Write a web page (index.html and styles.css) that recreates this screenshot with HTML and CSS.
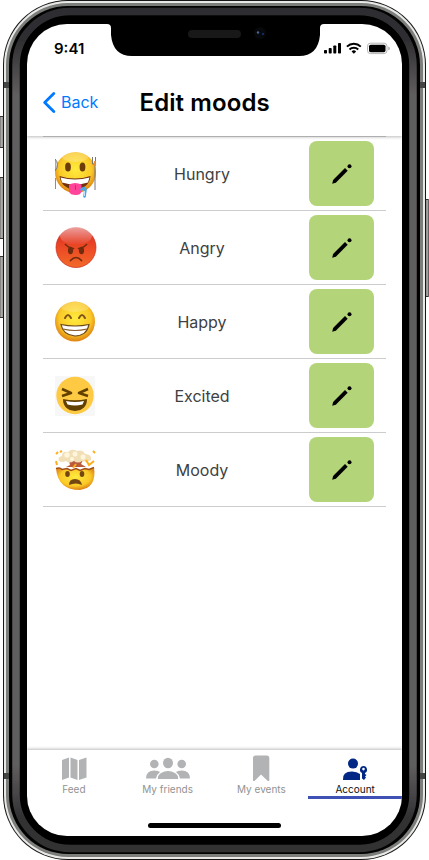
FILE: index.html
```
<!DOCTYPE html>
<html lang="en">
<head>
<meta charset="utf-8">
<title>Edit moods</title>
<link rel="stylesheet" href="styles.css">
</head>
<body>
<svg class="device" viewBox="0 0 429 860" aria-hidden="true">
  <defs>
    <linearGradient id="bezel" x1="0" y1="0" x2="0" y2="1">
      <stop offset="0" stop-color="#2f2f31"/><stop offset=".035" stop-color="#2f2f31"/>
      <stop offset=".1" stop-color="#615e5f"/><stop offset=".9" stop-color="#615e5f"/>
      <stop offset=".965" stop-color="#303032"/><stop offset="1" stop-color="#303032"/>
    </linearGradient>
    <linearGradient id="button"><stop offset="0" stop-color="#555"/><stop offset=".5" stop-color="#aaa9a5"/><stop offset="1" stop-color="#888"/></linearGradient>
    <filter id="soft"><feGaussianBlur stdDeviation=".7"/></filter>
    <radialGradient id="yellow" cy=".42" r=".55"><stop offset="0" stop-color="#ffeb3d"/><stop offset=".72" stop-color="#fac928"/><stop offset="1" stop-color="#e18a16"/></radialGradient>
    <linearGradient id="red" x2="0" y2="1"><stop offset="0" stop-color="#d92923"/><stop offset=".55" stop-color="#ed4c25"/><stop offset="1" stop-color="#f26a29"/></linearGradient>
    <linearGradient id="shine" x2="0" y2="1"><stop offset="0" stop-color="#fff" stop-opacity=".6"/><stop offset="1" stop-color="#fff" stop-opacity="0"/></linearGradient>
  </defs>
  <g fill="url(#button)" stroke="#333" stroke-width="1">
    <rect x="-1" y="116.500" width="5" height="31" rx="1"/><rect x="-1" y="177.500" width="5" height="61" rx="1"/><rect x="-1" y="256.500" width="5" height="61" rx="1"/><rect x="425" y="199.500" width="4" height="97" rx="1"/>
  </g>
  <rect x="3" width="423" height="860" rx="65" fill="#171717"/>
  <rect x="4" y="1" width="421" height="858" rx="64" fill="#e9e9e7"/>
  <rect x="6" y="3" width="417" height="854" rx="62" fill="#7b7e7b"/>
  <rect x="9" y="6" width="411" height="848" rx="59" fill="#020202"/>
  <rect x="16" y="11.500" width="397" height="837" rx="54" fill="none" stroke="url(#bezel)" stroke-width="7.500" filter="url(#soft)"/>
  <rect x="20.500" y="16" width="388" height="828" rx="48" fill="#000"/>
  <path d="M4 82h5v6H4zM420 82h5v6h-5zM4 773h5v6H4zM420 773h5v6h-5z" fill="#444"/>
</svg>

<main class="screen">
  <div class="status">
    <time class="clock">9:41</time>
    <svg class="signals" width="66" height="14" viewBox="0 0 66 14" aria-hidden="true">
      <g><rect y="9" width="3" height="3.500" rx=".8"/><rect x="4.700" y="7" width="3" height="5.500" rx=".8"/><rect x="9.300" y="4.500" width="3" height="8" rx=".8"/><rect x="14" y="2" width="3" height="10.500" rx=".8"/></g>
      <g fill="none" stroke="#000" stroke-width="2"><path d="M22.900 5.600a10 10 0 0 1 13.900 0M25.500 8.500a6.200 6.200 0 0 1 8.700 0"/></g>
      <path d="m29.850 12.800-2.300-2.400a3.300 3.300 0 0 1 4.600 0z"/>
      <rect x="43.500" y="2.200" width="19.500" height="10.400" rx="3" fill="none" stroke="#b5b5b5"/><rect x="45" y="3.700" width="16.500" height="7.500" rx="1.600"/><path d="M64.200 5.500q1.800.5 1.800 1.900t-1.800 1.900z" fill="#b5b5b5"/>
    </svg>
  </div>

  <header class="header">
    <a class="back"><svg width="13" height="21" viewBox="0 0 13 21"><path d="M10.800 1.500 1.700 10.500l9.100 9" fill="none" stroke="#007aff" stroke-width="2.800" stroke-linecap="round" stroke-linejoin="round"/></svg>Back</a>
    <h1 class="title">Edit moods</h1>
  </header>

  <ul class="moods">
    <li class="mood">
      <svg class="face" viewBox="0 0 42 50">
        <circle cx="20.500" cy="23.500" r="20.500" fill="url(#yellow)"/>
        <ellipse cx="20" cy="8" rx="13" ry="5" fill="#fff" opacity=".22"/>
        <path d="M0 10q5 5 0 12z" fill="#ddd" stroke="#777"/><path d="M.5 29v11" stroke="#a86" fill="none"/>
        <path d="M37.500 8v7h2.500v26M40.500 8v6" fill="none" stroke="#777"/><path d="M40 12v5" stroke="#e58b35" stroke-width="2"/>
        <ellipse cx="13" cy="18" rx="2.900" ry="4.500" fill="#6b3c09"/><ellipse cx="27.500" cy="18" rx="2.900" ry="4.500" fill="#6b3c09"/>
        <path d="M4.500 27q15.500 5 31 0-1 12-15.500 14Q6 39 4.500 27z" fill="#713112"/><path d="M5.500 28.500q14.500 4 29 0l-1.500 5q-13 4-26 0z" fill="#fff"/>
        <path d="M14 35.500q6-3 12.500 0v7q-1 3.500-5.500 3.500-6 0-7-3.500z" fill="#ff4499"/><path d="M20.500 36v5" stroke="#d72578"/>
        <path d="M26.500 40.500q3-3 4 0l-1 7" fill="none" stroke="#49a5e8" stroke-width="2.600" stroke-linecap="round"/><path d="M29.500 42v5" stroke="#b9e4fc"/>
      </svg>
      <span class="name">Hungry</span>
      <button class="edit" aria-label="Edit Hungry"><svg viewBox="0 0 22 22"><path d="m1.200 20.800.9-3.800L14 5.100l2.700 2.700L4.800 19.700z"/><circle cx="18.500" cy="3.300" r="2"/></svg></button>
    </li>
    <li class="mood">
      <svg class="face" viewBox="0 0 42 50">
        <circle cx="21" cy="24.500" r="20" fill="url(#red)" stroke="#c92c20" stroke-width=".7"/><ellipse cx="21" cy="12.500" rx="16" ry="9.500" fill="url(#shine)"/>
        <g fill="#712c0d"><ellipse cx="15.500" cy="27.500" rx="2.600" ry="3.700"/><ellipse cx="26.500" cy="27.500" rx="2.600" ry="3.700"/></g>
        <path d="M10.500 21.500q4 4 8 4M31.500 21.500q-4 4-8 4M15.500 37.500q5.500-6 11 0" fill="none" stroke="#712c0d" stroke-width="1.700" stroke-linecap="round"/>
      </svg>
      <span class="name">Angry</span>
      <button class="edit" aria-label="Edit Angry"><svg viewBox="0 0 22 22"><path d="m1.200 20.800.9-3.800L14 5.100l2.700 2.700L4.800 19.700z"/><circle cx="18.500" cy="3.300" r="2"/></svg></button>
    </li>
    <li class="mood">
      <svg class="face" viewBox="0 0 42 50">
        <circle cx="20" cy="24.500" r="20" fill="url(#yellow)"/><ellipse cx="20" cy="10" rx="14" ry="5" fill="#fff" opacity=".2"/>
        <path d="M10 21q3-6 6 0M24 21q3-6 6 0" fill="none" stroke="#805217" stroke-width="2" stroke-linecap="round"/>
        <path d="M6 27.500q14 3 28 0-2 11-14 11.500Q8 38 6 27.500z" fill="#fff" stroke="#6b4618" stroke-width="1.200"/><path d="M8 32q12 3 24 0" fill="none" stroke="#865a27" stroke-width="1.200"/>
      </svg>
      <span class="name">Happy</span>
      <button class="edit" aria-label="Edit Happy"><svg viewBox="0 0 22 22"><path d="m1.200 20.800.9-3.800L14 5.100l2.700 2.700L4.800 19.700z"/><circle cx="18.500" cy="3.300" r="2"/></svg></button>
    </li>
    <li class="mood">
      <svg class="face" viewBox="0 0 42 50">
        <path d="M0 5h40v40H0z" fill="#f7f7f7"/><circle cx="20" cy="24.500" r="18.700" fill="#ffca43"/>
        <path d="m7 18 9 4-9 3M33 18l-9 4 9 3" fill="none" stroke="#614000" stroke-width="2.600" stroke-linejoin="round"/>
        <path d="M8 28q12 2.500 24 0 0 11-12 12Q8 39 8 28z" fill="#614000"/><path d="M11 30q9 2 18 0l-1.500 3.500q-7.500 2-15 0z" fill="#fff"/>
      </svg>
      <span class="name">Excited</span>
      <button class="edit" aria-label="Edit Excited"><svg viewBox="0 0 22 22"><path d="m1.200 20.800.9-3.800L14 5.100l2.700 2.700L4.800 19.700z"/><circle cx="18.500" cy="3.300" r="2"/></svg></button>
    </li>
    <li class="mood">
      <svg class="face" viewBox="0 0 42 50">
        <path d="M1 23.500q4-1.500 6 1l5-1 4 2 5-2 4 2 5-2 4 1 5-2q3 20-14 22.500Q3 45 1 23.500z" fill="url(#yellow)"/><path d="M1 23.500q4-1.500 6 1l5-1 4 2 5-2 4 2 5-2 4 1 5-2" fill="none" stroke="#a24d18" stroke-width="1.500"/>
        <path d="m14 16 1 4-4 2h20l-5-3 2-4z" fill="#b85c3c"/>
        <path d="M4 16q-2-4 3-5 0-5 6-4 4-4 9-1 6-2 8 3 7 0 6 6-4 3-9 1-4 3-8 0-5 3-8 0-4 2-7 0z" fill="#f1dfb7"/>
        <g fill="#fff5db"><circle cx="12" cy="10" r="2.700"/><circle cx="20" cy="9" r="2.500"/><circle cx="28" cy="12" r="2.500"/><circle cx="17" cy="14" r="2"/></g>
        <path d="m1 16 1 4M1 9l2-2M5 7l2-1M38 6l2 2M31 15l3 5 5-4M18 23l3-4" stroke="#ffae1b" stroke-width="2" fill="none"/>
        <g fill="#744712"><ellipse cx="12.500" cy="29" rx="2.300" ry="3"/><ellipse cx="27" cy="29" rx="2.300" ry="3"/><path d="M14 40q0-6 6-6t7 6q-6-3-13 0z"/></g>
      </svg>
      <span class="name">Moody</span>
      <button class="edit" aria-label="Edit Moody"><svg viewBox="0 0 22 22"><path d="m1.200 20.800.9-3.800L14 5.100l2.700 2.700L4.800 19.700z"/><circle cx="18.500" cy="3.300" r="2"/></svg></button>
    </li>
  </ul>

  <nav class="tabs">
    <a class="tab"><svg width="46" height="28" viewBox="0 0 46 28"><path d="m11 6 7-2.500v20L11 26zM19.500 3.500l7 2.500v20l-7-2.500zM28 6l7.500-2.500v20L28 26z"/></svg><span>Feed</span></a>
    <a class="tab"><svg width="46" height="28" viewBox="0 0 46 28"><circle cx="9.300" cy="10" r="4.300"/><circle cx="36.700" cy="10" r="4.300"/><ellipse cx="23" cy="9" rx="5" ry="5.200"/><path d="M1 24.500q0-8 8.500-8 4 0 5.500 1.500-3 2-4 6.500zM45 24.500q0-8-8.500-8-4 0-5.500 1.500 3 2 4 6.500zM13 25q-1-3 3-6 7-4 14 0 4 3 3 6z"/></svg><span>My friends</span></a>
    <a class="tab"><svg width="46" height="28" viewBox="0 0 46 28"><path d="M15 4q0-2.500 2.500-2.500h11.300q2.500 0 2.500 2.500v22.500q-1 1-2 0L23 20.500l-6 6q-1 1-2 0z"/></svg><span>My events</span></a>
    <a class="tab active"><svg width="46" height="28" viewBox="0 0 46 28"><circle cx="21" cy="9.600" r="5"/><path d="M11 26q-1-8.500 9-8.500 5 0 8 2.500V26z"/><path fill-rule="evenodd" d="M31.500 12a3.700 3.700 0 0 1 1.500 7v1l1.500 1-1.500 1.500 1 1-2 2.500-2-1.500V19a3.700 3.700 0 0 1 1.500-7zm0 1.800a1.300 1.300 0 1 0 0 2.600 1.300 1.300 0 0 0 0-2.600z"/></svg><span>Account</span></a>
  </nav>
  <div class="home"></div>
</main>

<svg class="notch" width="217" height="33" viewBox="0 0 217 33" aria-hidden="true">
  <path d="M0 0h217q-4 0-4 4v7q-2 21-21 21H25Q6 32 4 11V4Q4 0 0 0z"/>
  <rect x="81" y="6" width="53" height="8" rx="4" fill="#181818"/><circle cx="153" cy="9" r="6" fill="#07080b"/><circle cx="151" cy="8.500" r="1.200" fill="#4a6590"/><circle cx="156" cy="10" r="1.100" fill="#123477"/>
</svg>
</body>
</html>
```
FILE: styles.css
```
* { box-sizing: border-box; }
body {
  margin: 0;
  width: 429px;
  height: 860px;
  padding: 24px 27px;
  position: relative;
  overflow: hidden;
  background: #fff;
  font-family: Inter, "Liberation Sans", sans-serif;
}
.device { position: absolute; inset: 0; width: 429px; height: 860px; }
.notch { position: absolute; top: 24px; left: 107px; }
.screen {
  position: relative;
  display: flex;
  flex-direction: column;
  width: 375px;
  height: 812px;
  overflow: hidden;
  border-radius: 40px;
  background: #fff;
}
.status {
  display: flex;
  justify-content: space-between;
  height: 44px;
  padding: 17px 12px 0 27px;
}
.clock { font-size: 15px; line-height: 15px; font-weight: 600; }
.header {
  display: grid;
  grid-template-columns: 96px 1fr;
  align-items: center;
  height: 68px;
  padding: 0 16px;
  box-shadow: 0 1px 3px #0004;
  clip-path: inset(0 0 -5px);
}
.back { display: flex; align-items: center; gap: 5px; color: #007aff; font-size: 16px; }
.title { margin: 2px 0 0 .5px; font-size: 24px; font-weight: 600; line-height: 30px; letter-spacing: .1px; }
.moods {
  flex: 1;
  position: relative;
  margin: 0 16px;
  padding: 0;
  list-style: none;
  border-top: 1px solid #aeb0b0;
}
.mood {
  display: grid;
  grid-template-columns: 42px 1fr 65px;
  align-items: center;
  height: 74px;
  padding: 0 12px;
  border-bottom: 1px solid #ccc;
}
.face { width: 42px; height: 50px; }
.name { color: #3d4142; font-size: 16px; line-height: 24px; text-align: center; padding-right: 2px; }
.edit {
  display: grid;
  place-items: center;
  width: 65px;
  height: 65px;
  padding: 0;
  border: 0;
  border-radius: 8px;
  background: #b3d478;
}
.edit svg { width: 22px; height: 22px; }
.tabs {
  display: grid;
  grid-template-columns: repeat(4, 1fr);
  height: 49px;
  box-shadow: 0 -1px 3px #0004;
  clip-path: inset(-5px 0 0);
}
.tab {
  display: flex;
  flex-direction: column;
  align-items: center;
  padding-top: 4px;
  border-bottom: 3px solid transparent;
  color: #929292;
  fill: #b1b3b5;
  font-size: 10px;
  line-height: 14px;
}
.active { color: #111; fill: #002884; border-color: #3f51b5; }
.home { width: 133px; height: 5px; margin: 24px auto 8px; border-radius: 3px; background: #000; }
```
